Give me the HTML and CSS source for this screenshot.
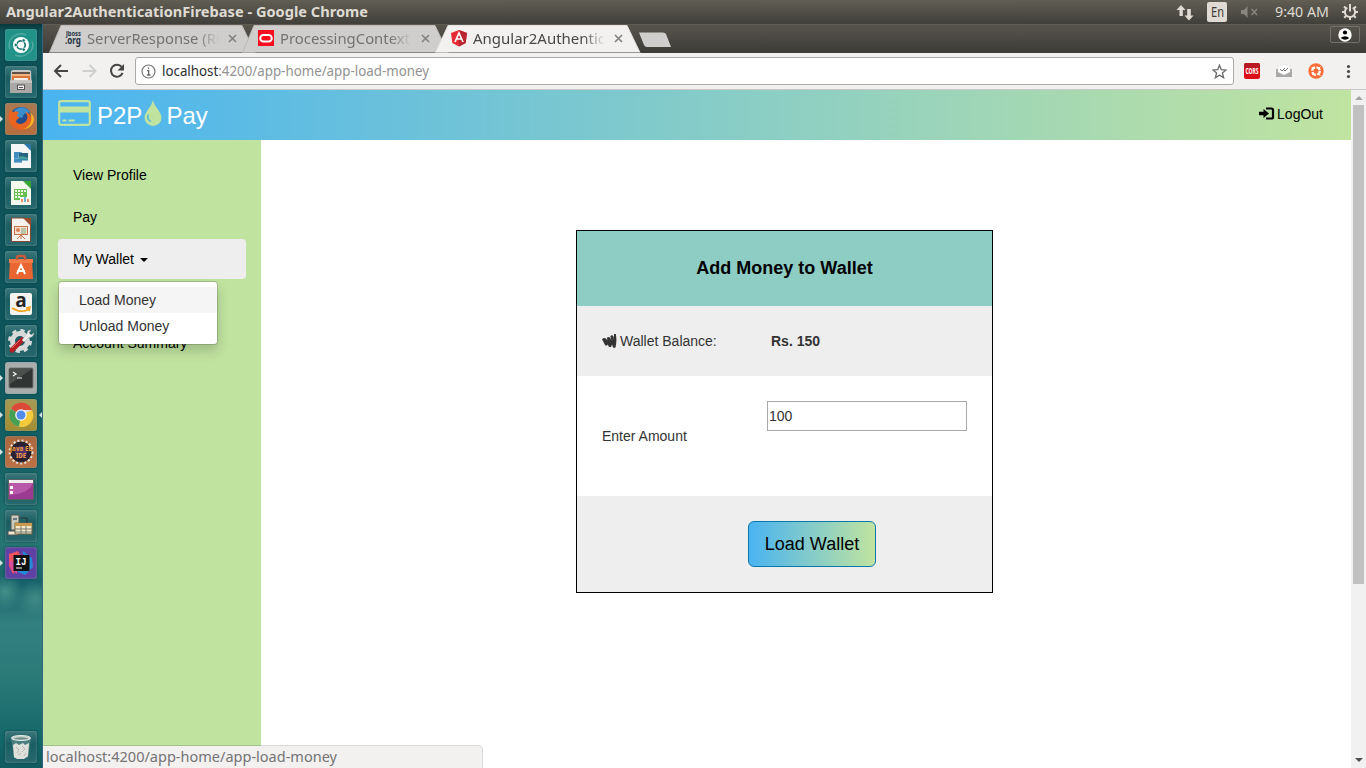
FILE: index.html
```html
<!DOCTYPE html>
<html lang="en">
<head>
<meta charset="utf-8">
<title>Angular2AuthenticationFirebase</title>
<link rel="stylesheet" href="styles.css">
</head>
<body>
<div class="desktop">
  <header class="panel">
    <svg class="fit-text panel-title" width="362" height="24"><text x="0" y="17" textLength="362" lengthAdjust="spacingAndGlyphs">Angular2AuthenticationFirebase - Google Chrome</text></svg>
    <div class="indicators">
      <svg class="net" width="18" height="17" viewBox="0 0 18 17"><path d="M5 1 0.5 6H3.5V12H6.8V6H9.5ZM13 16.5 17.5 11.5H14.8V5H11.2V11.5H8.5Z"/></svg>
      <span class="lang"><svg class="fit-text" width="14" height="20"><text x="0" y="15" textLength="13" lengthAdjust="spacingAndGlyphs">En</text></svg></span>
      <svg class="sound" width="19" height="14" viewBox="0 0 19 14"><path d="M1 5H4L7.500 1V13L4 9H1Z"/><path class="mute" d="m11.500 4 5.500 6m0-6-5.500 6"/></svg>
      <svg class="fit-text clock" width="54" height="24"><text x="0" y="17" textLength="54" lengthAdjust="spacingAndGlyphs">9:40 AM</text></svg>
      <svg class="gear" width="18" height="18" viewBox="0 0 18 18"><path d="M6.200 4.700a5.100 5.100 0 1 0 5.600 0"/><path d="M9 1V8.500M1 9H4M14 9h3M9 14v3M3 3.500l2 1.800M15 3.500l-2 1.800M3.200 14.800l2-2M14.800 14.800l-2-2"/></svg>
    </div>
  </header>
  <div class="workspace">
    <nav class="launcher">
      <div class="tile dash"><svg viewBox="0 0 32 32"><path d="M5 20C1 10 12 2 21 6M27 12c4 10-8 18-17 14" fill="none" stroke="#4fa9a0" stroke-width="1.500"/><circle cx="16" cy="16" r="8" fill="#fff"/><circle cx="16" cy="16" r="4.200" fill="none" stroke="#17766f" stroke-width="1.700"/><g fill="#17766f" stroke="#fff" stroke-width=".7"><circle cx="10.800" cy="16" r="1.700"/><circle cx="18.700" cy="11.400" r="1.700"/><circle cx="18.700" cy="20.600" r="1.700"/></g></svg></div>
      <div class="tile"><svg viewBox="0 0 32 32"><path d="M6 5 8 4H24l2 1 1 22H5Z" fill="#cac9c7"/><path d="M7 6H25V14H7Z" fill="#5f5146"/><path d="M7 8H25V10H7Z" fill="#f0b482"/><path d="M7 10H25V14H7Z" fill="#d87436"/><path d="M9 12H23V15H9Z" fill="#f4eee7"/><path d="M5 14.500H27V27H5Z" fill="#aaa8a5"/><path d="M5 14.500H27V17H5Z" fill="#c6c4c2"/><rect x="12.500" y="19" width="7" height="4.500" fill="#eee" stroke="#555"/><path d="M14 21.500h4" stroke="#555"/></svg></div>
      <div class="tile fox run"><svg viewBox="0 0 32 32"><circle cx="16" cy="15" r="11" fill="#254c8c"/><path d="M9 8c4-5 12-5 16 1l-6 2-2 4-5-1Z" fill="#3b8fcd"/><path d="M5 7c1 1 2 2 4 2 2-1 4 0 5 1-1 1-2 1-2 3 2 1 3 2 1 3-1 1-2 1-2 3 4 4 10 1 11-3 1-3 0-5-2-7 5 1 6 4 6 6 1-3 0-5-1-7 4 6 3 14-4 18-7 3-15-1-17-9-1-4 0-7 1-10Z" fill="#e96420"/><path d="M24 9c5 6 2 15-6 17 5 0 10-3 11-9 0-4-2-6-5-8Z" fill="#f7b526"/></svg></div>
      <div class="tile"><svg viewBox="0 0 32 32"><path d="M6 4H20l6 6V28H6Z" fill="#f4f6f6"/><path d="M19 4H26V11Z" fill="#2d77a9"/><path d="M9 12H17V22H9Z" fill="#67a7d1"/><path d="M14 13H23V19H14Z" fill="#26647f"/><path d="M14 17q4-2 9 1v2h-9Z" fill="#4aa1a0"/><path d="M9 13h6M9 15h4M9 17h4M9 20h14M9 22h8" stroke="#1f75ac"/></svg></div>
      <div class="tile"><svg viewBox="0 0 32 32"><path d="M6 4H20l6 6V28H6Z" fill="#f5faef"/><path d="M18 4H26V12Z" fill="#34a735"/><path d="M9 12H22V23H9Z" fill="#66bd52"/><path d="M10 13h2v2h-2zm3 0h2v2h-2zm3 0h2v2h-2zm3 0h2v2h-2zm-9 3h2v2h-2zm3 0h2v2h-2zm3 0h2v2h-2zm-6 3h2v2h-2zm3 0h2v2h-2z" fill="#effce9"/><path d="M15 20h9v5h-9z" fill="#fff"/><path d="M16 22h2v3h-2zm6 0h2v3h-2z" fill="#e5905c"/><path d="M19 20h2v5h-2z" fill="#6ab3d4"/></svg></div>
      <div class="tile"><svg viewBox="0 0 32 32"><path d="M6.500 4H20l5.500 6V27.500H6.500Z" fill="#f5f2ee" stroke="#83462e"/><path d="M18 4H26V12Z" fill="#9b4c2c"/><path d="M9 12H23V21H9Z" fill="#c77047"/><path d="M10 13H22V20H10Z" fill="#f1e1d4"/><circle cx="13" cy="16" r="2" fill="#dd8056"/><path d="M16 15h5M16 17h5m-5 2h5" stroke="#85a46e"/><path d="m16 21-4 4m4-4 4 4m-4-4v4" stroke="#c77047"/></svg></div>
      <div class="tile"><svg viewBox="0 0 32 32"><path d="M5 8H27L28 28H4Z" fill="#e96531"/><path d="M4 8H28V12H4Z" fill="#f27b48"/><path d="M12 9V6.500q0-1.500 2-1.500h4q2 0 2 1.500V9" fill="none" stroke="#c75a3b" stroke-width="2.500"/><path d="m12 23 4-9 4 9m-8-3h8" fill="none" stroke="#fff" stroke-width="1.900"/></svg></div>
      <div class="tile"><svg viewBox="0 0 32 32"><rect x="5" y="5" width="22" height="22" rx="2" fill="#f3f3f0"/><text x="16" y="19" text-anchor="middle" class="amazon">a</text><path d="M7 20q10 6 17 1m-3-1 4-1-1 4" fill="none" stroke="#f4a21c" stroke-width="1.600"/></svg></div>
      <div class="tile"><svg viewBox="0 0 32 32"><circle cx="15" cy="16" r="7.500" fill="none" stroke="#d7d9d8" stroke-width="5"/><circle cx="15" cy="16" r="10.500" fill="none" stroke="#d7d9d8" stroke-width="3" stroke-dasharray="4.250 4"/><path d="m7 25 10-10" stroke="#b51e23" stroke-width="5" stroke-linecap="round"/><path d="m17 15 5-6q0-4 4-4l-2 3 2 2 3-2q-1 5-5 4l-5 5Z" fill="#eee" stroke="#aaa" stroke-width=".5"/><path d="m7 23 8-8" stroke="#ed6b61" stroke-width="1"/></svg></div>
      <div class="tile grey run"><svg viewBox="0 0 32 32"><rect x="4" y="6" width="24" height="20" rx="1" fill="#303432" stroke="#777"/><path d="M5 7H27L5 22Z" fill="#4b504d"/><path d="m8 10 3 2-3 2m4 2h5" fill="none" stroke="#f3f3f3" stroke-width="1.200"/></svg></div>
      <div class="tile olive run focus"><svg viewBox="0 0 32 32"><circle cx="16" cy="16" r="11.500" fill="#ddd"/><path d="M16 16 6 10A11.500 11.500 0 0 1 27 11H16Z" fill="#dc4938"/><path d="M16 16 27 11A11.500 11.500 0 0 1 14 27.500Z" fill="#f3ca39"/><path d="M16 16 14 27.500A11.500 11.500 0 0 1 6 10Z" fill="#45a052"/><circle cx="16" cy="16" r="5.800" fill="#f7f7f7"/><circle cx="16" cy="16" r="4.500" fill="#528be9"/></svg></div>
      <div class="tile copper run"><svg viewBox="0 0 32 32"><circle cx="16" cy="16" r="11" fill="none" stroke="#dfdbd5" stroke-width="3" stroke-dasharray="2 2"/><circle cx="16" cy="16" r="10" fill="#292133" stroke="#211f22"/><circle cx="16" cy="16" r="6" fill="#51316d"/><g class="javaee"><text x="5" y="15" textLength="22" lengthAdjust="spacingAndGlyphs">Java EE</text><text x="11" y="22" textLength="10" lengthAdjust="spacingAndGlyphs">IDE</text></g></svg></div>
      <div class="tile"><svg viewBox="0 0 32 32"><rect x="3.500" y="6.500" width="25" height="20" fill="#9c3a91" stroke="#5d6061"/><path d="M4 7H28V10H4Z" fill="#eeedec"/><path d="M4 10H28Q24 21 4 22Z" fill="#b758a9"/><path d="M5 13h3v3H5zm0 5h3v3H5zM4 7h2v2H4z" fill="#faf8fa"/></svg></div>
      <div class="tile"><svg viewBox="0 0 32 32"><path d="M6 5h8v15H6z" fill="#c9cabb" stroke="#555"/><path d="M8 8h4v2H8z" fill="#667788"/><path d="M3 21h10v4H3z" fill="#eee9d3" stroke="#555"/><path d="M10 13H27V24H10Z" fill="#f6ebc7" stroke="#71623d"/><path d="M10 13H27V16H10Z" fill="#c9994f"/><path d="M10 19h17M10 22h17M16 16v8M21 16v8" stroke="#777"/><path d="M15 8h7v5" fill="none" stroke="#333"/></svg></div>
      <div class="tile violet run"><svg viewBox="0 0 32 32"><path d="m4 7 9-3 5 10-10 13-4-8Z" fill="#ef5261"/><path d="m18 4 9 7 1 9-8 8-9-4Z" fill="#218bd9"/><path d="m17 4-4 8 5 12 5-5Z" fill="#7c38a5"/><path d="M4 14h8v13l-6-5Z" fill="#d64b9a"/><rect x="8.500" y="8" width="16" height="16" fill="#111"/><path d="M11 21h6" stroke="#fff"/><text x="10.500" y="18" class="idea" textLength="11" lengthAdjust="spacingAndGlyphs">IJ</text></svg></div>
      <div class="tile trash"><svg viewBox="0 0 32 32"><path d="M6 7 9 27H23L26 7Z" fill="#799e99" opacity=".5"/><path d="m8 14 3-2 3 2 4-2 2 2 4-2-1 13-4 3H12l-3-2Z" fill="#dfe0dc"/><path d="m11 16 3 3-2 3m5-7 3 3-3 3m-4 3 3-2m3 3 2-3" stroke="#b5b7b4" fill="none"/><ellipse cx="16" cy="7" rx="9.500" ry="2.500" fill="#c9cfca" stroke="#e4e9e6"/><ellipse cx="16" cy="7.500" rx="7" ry="1.200" fill="#6b908b"/></svg></div>
    </nav>
    <main class="browser">
      <div class="tabs">
        <div class="tab">
          <svg class="tab-shape" viewBox="0 0 208 29"><path d="M.5 28.500 12 1.500H193L206 28.500"/></svg>
          <svg class="favicon jboss" width="17" height="17"><text x="1" y="6" textLength="15" lengthAdjust="spacingAndGlyphs">jboss</text><text class="org" x="0" y="14" textLength="16" lengthAdjust="spacingAndGlyphs">.org</text></svg>
          <svg class="fit-text title" width="133" height="28"><text x="0" y="19" textLength="137" lengthAdjust="spacingAndGlyphs">ServerResponse (RE</text></svg>
          <svg class="close" width="9" height="9"><path d="m1 1 7 7m0-7-7 7"/></svg>
        </div>
        <div class="tab">
          <svg class="tab-shape" viewBox="0 0 208 29"><path d="M.5 28.500 12 1.500H193L206 28.500"/></svg>
          <svg class="favicon" width="17" height="17"><path fill="#f80d20" d="M0 0h16v16H0z"/><rect x="2.200" y="5" width="11.600" height="6.500" rx="3.250" fill="none" stroke="#fff" stroke-width="2"/></svg>
          <svg class="fit-text title" width="133" height="28"><text x="0" y="19" textLength="130" lengthAdjust="spacingAndGlyphs">ProcessingContext</text></svg>
          <svg class="close" width="9" height="9"><path d="m1 1 7 7m0-7-7 7"/></svg>
        </div>
        <div class="tab active">
          <svg class="tab-shape" viewBox="0 0 208 29"><path d="M.5 28.500 13 1.500H192L205 28.500"/></svg>
          <svg class="favicon" width="17" height="17"><path fill="#e52b36" d="m8 0 8 3-1.300 10L8 16.500 1.300 13 0 3Z"/><path fill="#b92531" d="m8 0 8 3-1.300 10L8 16.500Z"/><path d="m4 12 4-9 4 9m-6-3h4" fill="none" stroke="#fff" stroke-width="1.700"/></svg>
          <svg class="fit-text title" width="133" height="28"><text x="0" y="19" textLength="132" lengthAdjust="spacingAndGlyphs">Angular2Authentic</text></svg>
          <svg class="close" width="9" height="9"><path d="m1 1 7 7m0-7-7 7"/></svg>
        </div>
        <svg class="new-tab" width="34" height="16"><path d="M1 .5H25Q27 .5 28 2L33 15H9Q7 15 6 13Z"/></svg>
        <div class="account"><svg width="14" height="14"><circle cx="7" cy="7" r="6.700" fill="#fff"/><circle cx="7" cy="4.500" r="2.100"/><path d="M2.700 10Q7 6.500 11.300 10 7 13.500 2.700 10Z"/></svg></div>
      </div>
      <div class="toolbar">
        <svg class="nav-icons" width="92" height="36"><path class="dark" d="M25 18H12m6-6-6 6 6 6"/><path class="pale" d="M39.500 18h13m-6-6 6 6-6 6"/><path class="dark" d="M78.700 13.900a6 6 0 1 0 .9 6"/><path d="M81 11v6.500h-6.500Z" fill="#464646"/></svg>
        <div class="omnibox">
          <svg width="15" height="15"><circle cx="7.500" cy="7.500" r="6.500" fill="none" stroke="#777" stroke-width="1.200"/><path d="M6 6.700h1.700V11M6 11h3.500M7.500 3.500v1.500" stroke="#666" stroke-width="1.300" fill="none"/></svg>
          <svg class="fit-text url" width="270" height="26"><text x="0" y="18" textLength="267" lengthAdjust="spacingAndGlyphs"><tspan class="host">localhost</tspan>:4200/app-home/app-load-money</text></svg>
          <svg class="star" width="15" height="15"><path d="m7.500 1.200 1.800 4.500 4.800.3-3.700 3 1.200 4.700-4.100-2.600-4.100 2.600L4.600 9 .9 6l4.800-.3Z"/></svg>
        </div>
        <div class="extensions">
          <svg width="16" height="16"><rect width="16" height="16" rx="2" fill="#dc101a"/><path d="M0 2q0-2 2-2h12q2 0 2 2v3H0Z" fill="#b71a22"/><text x="1.500" y="11" class="cors" textLength="13" lengthAdjust="spacingAndGlyphs">CORS</text></svg>
          <svg width="16" height="16"><path d="M0 6h16v8H0Z" fill="#a8a8a8"/><path d="M2 3 8 1l6 2v6l-6 3-6-3Z" fill="#fff" stroke="#d5d5d5" stroke-width=".5"/><path d="m4 6 2 2 3-3m-1 2 1 1 3-3" stroke="#777" fill="none"/></svg>
          <svg width="16" height="16"><circle cx="8" cy="8" r="7.700" fill="#ff6c37"/><circle cx="8" cy="8" r="3.800" fill="none" stroke="#fff" stroke-width="2.200" stroke-dasharray="4.500 1.470"/><path d="m3.500 4 2 2m5 5 2 2M4 12l2-2m5-5 1.500-1.500" stroke="#fff" stroke-width="1"/></svg>
          <svg class="menu-dots" width="5" height="16"><circle cx="2.500" cy="3.500" r="1.600"/><circle cx="2.500" cy="8.500" r="1.600"/><circle cx="2.500" cy="13.500" r="1.600"/></svg>
        </div>
      </div>
      <div class="viewport">
        <section class="page">
          <header class="app-header">
            <div class="brand">
              <svg width="33" height="26" viewBox="0 0 33 26"><rect x="1.200" y="1.200" width="30.600" height="23.600" rx="2" fill="none" stroke="#c0e3a0" stroke-width="2.200"/><path d="M1 6.500h31v6H1zM4.500 19.500h4v2h-4zm6 0h6v2h-6z" fill="#c0e3a0"/></svg>
              <span>P2P</span>
              <svg class="drop" width="18" height="26" viewBox="0 0 18 26"><path d="M9 0C7.500 7 .5 12 .5 17.500a8.500 8.500 0 0 0 17 0C17.500 12 10.500 7 9 0Z" fill="#c0e3a0"/><path d="M4.500 14.500q-2.200 5 2.500 7" fill="none" stroke="#5ebbdc" stroke-width="1.700"/></svg>
              <span>Pay</span>
            </div>
            <a class="logout"><svg width="16" height="14"><path d="M7 1.500h5.500q1.500 0 1.500 1.500v7q0 1.500-1.500 1.500H7" fill="none" stroke="#000" stroke-width="2.200"/><path d="M0 4.700h4.500V2l5.500 4.500L4.500 11V8.300H0Z"/></svg>LogOut</a>
          </header>
          <div class="app-body">
            <aside class="sidebar">
              <a>View Profile</a><a>Pay</a>
              <div class="dropdown"><a class="open">My Wallet <i class="caret"></i></a>
                <div class="dropdown-menu"><a class="hovered">Load Money</a><a>Unload Money</a></div>
              </div>
              <a></a><a>Account Summary</a>
            </aside>
            <form class="wallet">
              <h4>Add Money to Wallet</h4>
              <div class="row balance"><span><svg width="15" height="14" viewBox="0 0 15 14"><path d="M0 5.300q2-2 4-.8l1.300 2L5 3.700q1.500-1.500 3.300.2L9.500 7 8.300 2q2-1.500 3.200.5l.5 3V0h1.800q1.400 7-.4 13.800h-2.200L10 10.500 9 13H7L5.800 10.500 5 11.500H3.300Z"/></svg> Wallet Balance:</span><b>Rs. 150</b></div>
              <div class="row amount"><label>Enter Amount</label><input value="100"></div>
              <div class="row action"><button type="button">Load Wallet</button></div>
            </form>
          </div>
        </section>
        <div class="scrollbar"><i class="up"></i><div class="thumb"></div><i class="down"></i></div>
        <div class="status"><svg class="fit-text" width="295" height="22"><text x="0" y="16" textLength="291" lengthAdjust="spacingAndGlyphs">localhost:4200/app-home/app-load-money</text></svg></div>
      </div>
    </main>
  </div>
</div>
</body>
</html>
```
FILE: styles.css
```css
* { box-sizing: border-box; }
body { margin: 0; font: 14px/20px "Liberation Sans", Arial, sans-serif; color: #333; }
svg { display: block; flex: none; }
.desktop { width: 1366px; height: 768px; overflow: hidden; display: flex; flex-direction: column; }
.fit-text { font-family: "Noto Sans", sans-serif; font-size: 14px; overflow: visible; }

.panel { height: 24px; flex: none; display: flex; align-items: center; justify-content: space-between; padding: 0 7px 0 6px; background: linear-gradient(#615e53, #403f3a); }
.panel-title { font-weight: 700; font-size: 14px; fill: #dfdbd2; }
.indicators { display: flex; align-items: center; fill: #dfdbd2; }
.net { margin-right: 13px; }
.lang { width: 20px; height: 20px; padding-left: 4px; border-radius: 2px; background: #dfdbd2; margin-right: 13px; }
.lang svg { fill: #3d3c38; }
.sound { fill: #88857c; margin-right: 16px; }
.mute { stroke: #88857c; stroke-width: 1.500; }
.clock { margin-right: 12px; font-size: 14.500px; }
.gear { fill: none; stroke: #dfdbd2; stroke-width: 2; }

.workspace { flex: 1; min-height: 0; display: flex; }
.launcher { width: 43px; flex: none; display: flex; flex-direction: column; gap: 5px; padding: 5px 0 5px 5px; border-right: 1px solid #36667e;
  background: radial-gradient(circle at 35px 575px, #418a87 0, transparent 19px), radial-gradient(circle at 5px 568px, #438f88 0, transparent 18px), linear-gradient(#07373c 0, #0d5157 7px, #0e555b 320px, #146164 430px, #277572 520px, #17626a 560px, #338080 600px, #2b7b79 650px, #136567 720px, #105b60 100%); }
.tile { position: relative; width: 32px; height: 32px; flex: none; border-radius: 3px; background: linear-gradient(#3c777b, #195e63 38%, #27686d); box-shadow: inset 0 0 2px #75a0a0, 0 0 2px #073b40; }
.tile svg { width: 32px; height: 32px; }
.dash { background: #209288; }
.fox { background: linear-gradient(#a97951, #b86d3d); }
.grey { background: #a9adac; }
.olive { background: linear-gradient(#a59955, #a48d31); }
.copper { background: linear-gradient(#a9683f, #bd7045); }
.violet { background: #6040a2; }
.trash { margin-top: auto; }
.run::before, .focus::after { content: ""; position: absolute; top: 13px; border: solid transparent; border-width: 3px 0; }
.run::before { left: -5px; border-left: 3px solid #d3e3e1; }
.focus::after { right: -5px; border-right: 3px solid #d3e3e1; }
.amazon { font: bold 19px "Open Sans", sans-serif; fill: #252525; }
.javaee { font: bold 7px "Noto Sans", sans-serif; fill: #ed9b3b; }
.idea { font: bold 11px "Liberation Mono", monospace; fill: #fff; }

.browser { flex: 1; min-width: 0; display: flex; flex-direction: column; }
.tabs { height: 29px; flex: none; display: flex; padding-left: 6px; background: linear-gradient(#605b54 0 1px, #57544b 1px, #3c3b37); }
.tab { position: relative; width: 206px; flex: none; margin-right: -13px; padding-left: 16px; display: flex; align-items: center; }
.tab-shape { position: absolute; inset: 0; width: 208px; height: 29px; fill: #d0cecc; stroke: #bdbbb8; }
.active { z-index: 1; }
.active .tab-shape { fill: #f2f1f0; stroke: #e4e2df; }
.favicon, .title, .close { position: relative; }
.favicon { margin-right: 4.500px; }
.title { font-size: 15px; fill: #747270; overflow: hidden; -webkit-mask-image: linear-gradient(90deg, #000 110px, transparent 132px); mask-image: linear-gradient(90deg, #000 110px, transparent 132px); }
.active .title { fill: #484848; }
.jboss { font: 700 7.500px "Noto Sans", sans-serif; fill: #1f3444; overflow: visible; }
.org { font-weight: 700; font-size: 10.500px; }
.close { margin-left: 8px; stroke: #858381; stroke-width: 1.700; }
.new-tab { margin: 8px 0 0 10px; fill: #d0cecc; position: relative; }
.account { width: 30px; height: 17px; margin: 2px 6px 0 auto; display: grid; place-items: center; border: 1px solid #73716c; border-radius: 2px; }
.toolbar { height: 37px; flex: none; display: flex; align-items: center; background: #f2f1f0; border-bottom: 1px solid #c9c7c5; }
.nav-icons .dark, .nav-icons .pale { fill: none; stroke: #464646; stroke-width: 2; }
.nav-icons .pale { stroke: #cfcfcf; }
.omnibox { width: 1099px; height: 28px; display: flex; align-items: center; padding: 0 6px 0 5px; background: #fff; border: 1px solid #acaaa8; border-radius: 3px; }
.url { margin-left: 6px; fill: #929292; }
.host { fill: #2e2e2e; }
.star { margin-left: auto; fill: none; stroke: #6b6b6b; stroke-width: 1.300; }
.extensions { display: flex; gap: 16px; padding-left: 10px; }
.cors { font: bold 8px "Noto Sans", sans-serif; fill: #fff; }
.menu-dots { margin-left: 6px; fill: #484848; }

.viewport { position: relative; flex: 1; min-height: 0; display: flex; }
.page { flex: 1; display: flex; flex-direction: column; background: #fff; }
.app-header { height: 50px; flex: none; display: flex; justify-content: space-between; padding: 0 28px 0 15px; background: linear-gradient(90deg, #4ab4f1, #c0e3a0); }
.brand { display: flex; align-items: center; height: 50px; font-size: 24px; line-height: 52px; color: #fff; }
.brand span { padding-top: 2px; }
.brand > svg:first-child { margin: -4px 6px 0 0; }
.drop { margin: -5px 4px 0 2px; }
.logout { display: flex; align-items: center; height: 48px; gap: 2px; color: #000; }
.app-body { flex: 1; display: flex; }
.sidebar { width: 218px; padding: 15px; background: #c0e3a0; display: flex; flex-direction: column; gap: 2px; color: #000; }
.sidebar > a, .open { display: block; height: 40px; padding: 10px 15px; }
.open { background: #eee; border-radius: 4px; }
.caret { display: inline-block; margin-left: 2px; vertical-align: middle; border: 4px solid transparent; border-top-color: #000; border-bottom: 0; }
.dropdown { position: relative; }
.dropdown-menu { position: absolute; top: 42px; left: 0; width: 160px; height: 64px; padding: 5px 0; border: 1px solid rgba(0,0,0,.15); border-radius: 4px; background: #fff; background-clip: padding-box; box-shadow: 0 6px 12px rgba(0,0,0,.175); }
.dropdown-menu a { display: block; height: 26px; padding: 3px 20px; color: #333; }
.dropdown-menu .hovered { background: #f5f5f5; }
.wallet { width: 417px; height: 363px; margin: 90px 0 0 315px; border: 1px solid #000; }
.wallet h4 { height: 75px; margin: 0; background: #8ecdc4; color: #000; font-size: 18px; line-height: 74px; text-align: center; }
.row { display: flex; align-items: center; padding: 0 25px; }
.balance { height: 70px; background: #eee; }
.balance span { width: 169px; display: flex; gap: 3px; fill: #333; align-items: center; }
.amount { height: 120px; }
.amount label { width: 165px; }
.amount input { width: 200px; height: 30px; margin-bottom: 40px; padding: 1px; border: 1px solid #a9a9a9; color: #333; font: inherit; border-radius: 0; }
.action { height: 96px; padding-left: 171px; background: #eee; }
.action button { width: 128px; height: 46px; padding: 0; border: 1px solid #0879a7; border-radius: 6px; background: linear-gradient(90deg, #4ab4f1, #c0e3a0); color: #000; font: 18px/24px "Liberation Sans", Arial, sans-serif; }
.scrollbar { width: 15px; flex: none; display: flex; flex-direction: column; align-items: center; background: #f1f1f1; }
.thumb { width: 11px; height: 479px; background: #c1c1c1; }
.up, .down { border: 4px solid transparent; }
.up { margin: 2px 0 5px; border-bottom-color: #a3a3a3; }
.down { margin: auto 0 6px; border-top-color: #505050; border-bottom: 0; }
.status { position: absolute; left: 0; bottom: 0; width: 440px; height: 23px; padding-left: 3px; border: 1px solid rgba(0,0,0,.15); border-width: 1px 1px 0 0; border-radius: 0 5px 0 0; background: #f2f1f0; background-clip: padding-box; fill: #747474; }
```
